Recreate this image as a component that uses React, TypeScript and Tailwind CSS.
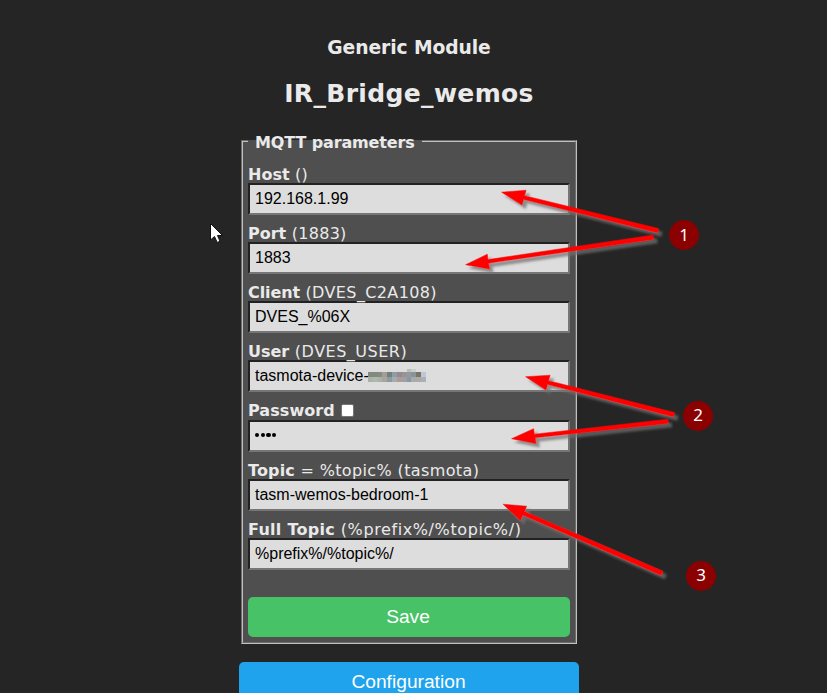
import React from "react";

type Field = {
  name: string;
  hint: string;
  value: string;
  row: string;
  hintSpacing: string;
  nameSpacing: string;
  type?: string;
};

const fields: Field[] = [
  { name: "Host", hint: "()", value: "192.168.1.99", row: "h-[59px]", nameSpacing: "pt-[2px]", hintSpacing: "tracking-[0.3px]" },
  { name: "Port", hint: "(1883)", value: "1883", row: "h-[59px]", nameSpacing: "pt-[2px]", hintSpacing: "tracking-[0.3px]" },
  { name: "Client", hint: "(DVES_C2A108)", value: "DVES_%06X", row: "h-[59px]", nameSpacing: "pt-[2px] tracking-[-0.1px]", hintSpacing: "tracking-[0.38px]" },
  { name: "User", hint: "(DVES_USER)", value: "tasmota-device-", row: "h-[59px]", nameSpacing: "pt-[2px]", hintSpacing: "tracking-[0.5px]" },
  { name: "Password", hint: "", value: "••••", row: "h-[60px]", nameSpacing: "tracking-[0.06px]", hintSpacing: "", type: "password" },
  { name: "Topic", hint: "= %topic% (tasmota)", value: "tasm-wemos-bedroom-1", row: "h-[59px]", nameSpacing: "pt-[2px] tracking-[0.15px]", hintSpacing: "tracking-[0.37px]" },
  { name: "Full Topic", hint: "(%prefix%/%topic%/)", value: "%prefix%/%topic%/", row: "h-[59px]", nameSpacing: "pt-[2px] tracking-[0.28px]", hintSpacing: "tracking-[0.6px]" },
];

const mosaic = [
  ["#ddd", "#ddd", "#ddd", "#ddd", "#ddd", "#ddd", "#ddd", "#ddd", "#b9bfba", "#c9cfcb", "#ddd", "#ddd"],
  ["#85877d", "#7f8a80", "#838d86", "#a79b94", "#6f7f82", "#949b9d", "#8c8d98", "#a0928c", "#929c9c", "#8a9496", "#77746a", "#c0c7d3"],
  ["#abb3a9", "#b0b8ac", "#a9b1a9", "#a9a59c", "#8e9b9c", "#a5abb0", "#ae9c93", "#9ba0ac", "#8b97a3", "#a5acab", "#b0a8a5", "#a8b1ba"],
];

function Mosaic() {
  return (
    <span className="mb-[2px] ml-[-1px] flex flex-col">
      {mosaic.map((line, r) => (
        <span key={r} className={r === 0 ? "flex h-[3px]" : "flex h-[5px]"}>
          {line.map((c, i) => (
            <i key={i} className="block h-full w-[4.85px]" style={{ backgroundColor: c }} />
          ))}
        </span>
      ))}
    </span>
  );
}

function FieldRow({ f }: { f: Field }) {
  return (
    <div className={"flex flex-col justify-end " + f.row}>
      <div className="relative flex h-[19px] items-center whitespace-pre leading-[19px]">
        <b className={f.nameSpacing}>{f.name}</b>
        {f.type === "password" ? (
          <span className="ml-[6px] h-[13px] w-[13px] rounded-[2px] border border-[#767676] bg-white" />
        ) : (
          <span className={"pt-[2px] " + f.hintSpacing}> {f.hint}</span>
        )}
      </div>
      <div className="flex h-8 shrink-0 items-center border-2 border-t-[#222] border-r-[#767676] border-b-[#767676] border-l-[#222] bg-[#ddd] px-[5px] font-['Liberation_Sans',Arial,sans-serif] text-[16px] leading-[18px] text-black">
        {f.type === "password" ? (
          <span className="mb-[2px] flex gap-[1.2px]">
            {[0, 1, 2, 3].map((i) => (
              <i key={i} className="block h-[4.4px] w-[4.4px] rounded-full bg-black" />
            ))}
          </span>
        ) : (
          <span>{f.value}</span>
        )}
        {f.name === "User" && <Mosaic />}
      </div>
    </div>
  );
}

const arrows = [
  "501,192 525.5,190 524,195.5 658,228.3 657,232.8 523,199.2 521.5,205",
  "465,264.5 486.7,254 487.4,259.4 652.6,234.8 653.4,239.2 488,263 489.3,269",
  "525,376.5 549.5,375 548,380.5 674,412.3 673,416.8 547,384.4 545.5,390",
  "511,438.5 533,428.5 533.8,434 667.2,419 667.8,423.3 534.8,437.6 535.5,443.5",
  "502.5,504 526,506 524,511.2 662.5,571 660.5,575.2 522.3,515 519.8,520.5",
];

const badges = [
  { n: "1", place: "left-[669px] top-[220px]" },
  { n: "2", place: "left-[683px] top-[400.5px]" },
  { n: "3", place: "left-[686px] top-[560.5px]" },
];

export default function App() {
  return (
    <main className="relative h-[693px] w-[827px] overflow-hidden bg-[#252525] font-[Verdana,'DejaVu_Sans',sans-serif] text-[16px] text-[#eaeaea]">
      <div className="ml-[239px] flex w-[340px] flex-col">
        <h3 className="mt-[36px] h-6 text-center text-[18.72px] leading-6 font-bold tracking-[-0.08px]">Generic Module</h3>
        <h2 className="mt-[18px] h-8 text-center text-[25px] leading-8 font-bold tracking-[0.35px]">IR_Bridge_wemos</h2>
        <fieldset className="mx-[2px] mt-[22px] h-[512px] border-2 border-[#c0c0c0] bg-[#4f4f4f] px-[5px] [border-style:groove]">
          <legend className="h-[18px] w-[174px] px-[7px] leading-[22px] font-bold tracking-[-0.13px] whitespace-nowrap">MQTT parameters</legend>
          <div className="mt-[6px] flex flex-col">
            {fields.map((f) => (
              <FieldRow key={f.name} f={f} />
            ))}
          </div>
          <button className="mt-[27px] block h-10 w-full rounded-[5px] bg-[#47c266] pr-[2px] font-['Liberation_Sans',Arial,sans-serif] text-[19.2px] leading-10 text-white">Save</button>
        </fieldset>
        <button className="mt-[18px] h-10 w-full rounded-[5px] bg-[#1fa3ec] pr-[1px] font-['Liberation_Sans',Arial,sans-serif] text-[19.2px] leading-10 text-white">Configuration</button>
      </div>

      <svg className="pointer-events-none absolute inset-0" width="827" height="693" viewBox="0 0 827 693">
        <defs>
          <filter id="cast" x="-10%" y="-30%" width="125%" height="170%">
            <feDropShadow dx="3.5" dy="3.5" stdDeviation="1.3" floodColor="#707070" floodOpacity="0.75" />
          </filter>
        </defs>
        <g transform="translate(0.6 0.2)">
          {arrows.map((p) => (
            <polygon key={p} points={p} fill="#ff0000" stroke="#ff0000" strokeWidth="0.5" filter="url(#cast)" />
          ))}
        </g>
        <path d="M210.5 223.5V240l4-3.5 2.7 6 2.8-1.2-2.5-5.8h5z" fill="#fff" stroke="#111" strokeWidth="1" />
      </svg>
      {badges.map((b) => (
        <span
          key={b.n}
          className={"absolute flex h-[30px] w-[30px] items-center justify-center rounded-full bg-[#8b0000] pb-[2px] font-['Noto_Sans',sans-serif] text-[17px] leading-none text-white " + b.place}
        >
          {b.n}
        </span>
      ))}
    </main>
  );
}
